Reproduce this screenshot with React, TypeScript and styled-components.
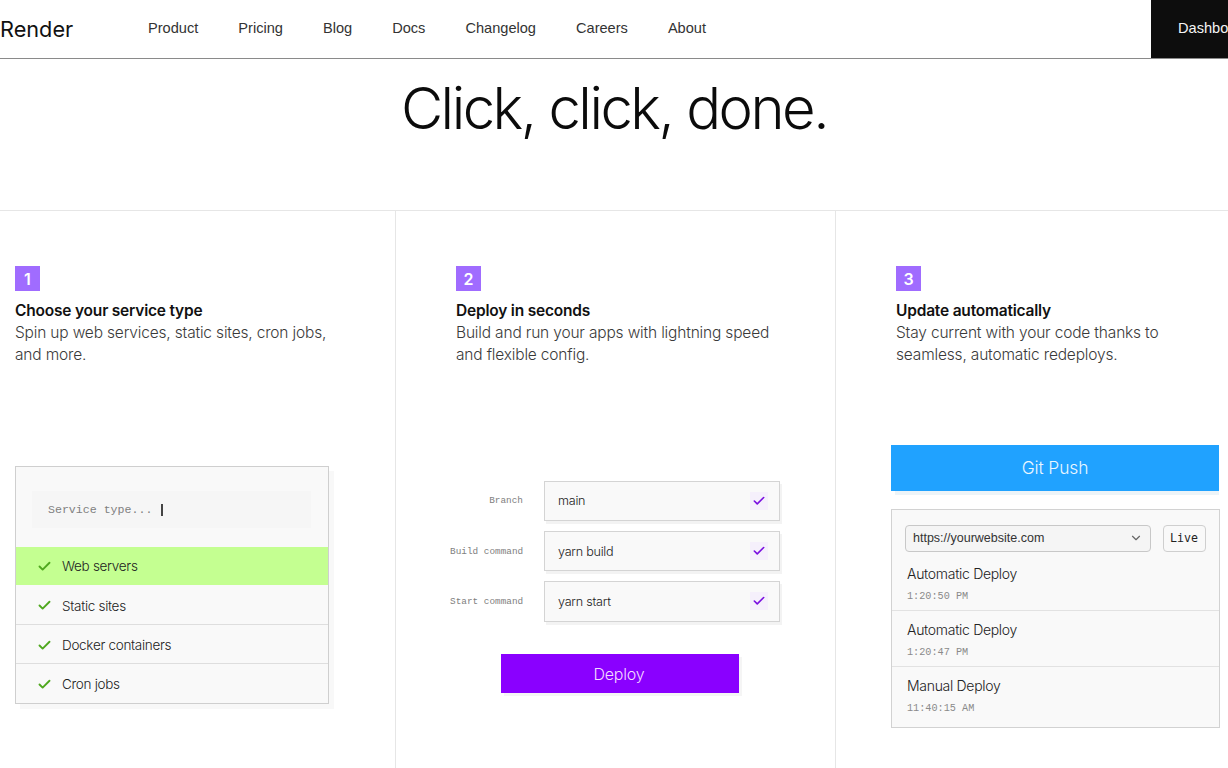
import React from 'react';
import styled, { createGlobalStyle } from 'styled-components';
import { Check, ChevronDown } from 'lucide-react';

const Global = createGlobalStyle`
  html, body {
    margin: 0;
    height: 768px;
    overflow: hidden;
    background: #fff;
    font-family: "Inter", "Liberation Sans", sans-serif;
    color: #111;
  }
  * { box-sizing: border-box; }
`;

// Header
const Header = styled.header`
  display: flex;
  align-items: center;
  width: 1228px;
  height: 59px;
  border-bottom: 1px solid #8a8a8a;
  overflow: hidden;
`;

const Logo = styled.div`
  width: 148px;
  flex: none;
  font-size: 21.7px;
  font-weight: 400;
  color: #111;
`;

const Nav = styled.nav`
  display: flex;
  gap: 40px;
  flex: 1;
  margin-top: -2px;
`;

const NavLink = styled.a`
  font-family: "Liberation Sans", sans-serif;
  font-size: 14.6px;
  color: #333;
`;

const Dashboard = styled.a`
  flex: none;
  align-self: stretch;
  width: 77px;
  margin-bottom: -1px;
  padding: 20px 0 0 27px;
  background: #0d0d0d;
  color: #f4f4f4;
  font-family: "Liberation Sans", sans-serif;
  font-size: 14.6px;
  white-space: nowrap;
  overflow: hidden;
`;

// Hero
const Hero = styled.div`
  height: 152px;
  border-bottom: 1px solid #e6e6e6;
  text-align: center;
`;

const Title = styled.h1`
  margin: 0;
  padding-top: 13px;
  font-size: 58px;
  line-height: 72px;
  font-weight: 300;
  letter-spacing: -2.5px;
  color: #0b0b0b;
`;

// Columns
const Columns = styled.div`
  display: grid;
  grid-template-columns: 396px 440px 392px;
  height: 557px;
`;

const Column = styled.section<{ $pad: number; $last?: boolean }>`
  padding: 55px 0 0 ${(p) => p.$pad}px;
  border-right: ${(p) => (p.$last ? 'none' : '1px solid #e6e6e6')};
`;

const Badge = styled.div`
  display: flex;
  align-items: center;
  justify-content: center;
  width: 25px;
  height: 25px;
  background: #a06cff;
  color: #fff;
  font-size: 16px;
  font-weight: 600;
`;

const StepTitle = styled.h3`
  margin: 9px 0 0;
  font-size: 15.5px;
  line-height: 22px;
  font-weight: 600;
  letter-spacing: -0.2px;
  color: #111;
`;

const StepText = styled.p`
  margin: 0;
  font-size: 15.5px;
  line-height: 22px;
  font-weight: 300;
  letter-spacing: -0.17px;
  color: #3a3a3a;
`;

// Service type card
const ServiceCard = styled.div`
  width: 314px;
  height: 238px;
  margin-top: 100px;
  border: 1px solid #cfcfcf;
  background: #f9f9f9;
  box-shadow: 5px 5px 0 #f8f8f8;
`;

const SearchBox = styled.div`
  display: flex;
  align-items: center;
  height: 37px;
  width: 279px;
  margin: 24px 0 19px 16px;
  padding-left: 16px;
  background: #f6f6f6;
  font-family: "Liberation Mono", monospace;
  font-size: 11.6px;
  color: #808080;
`;

const Caret = styled.span`
  width: 1.2px;
  height: 12px;
  margin-left: 9px;
  background: #444;
`;

const ServiceRow = styled.div<{ $active?: boolean; $divider?: boolean }>`
  display: flex;
  align-items: center;
  height: ${(p) => (p.$active ? '38px' : '39px')};
  padding: ${(p) => (p.$active ? '0' : '2px')} 0 0 20.5px;
  gap: 10.5px;
  font-size: 13.5px;
  font-weight: 300;
  letter-spacing: -0.3px;
  color: #222;
  background: ${(p) => (p.$active ? '#c4ff91' : 'transparent')};
  border-top: ${(p) => (p.$divider ? '1px solid #dedede' : 'none')};
`;

// Deploy form
const Form = styled.div`
  display: grid;
  grid-template-columns: 73px 236px;
  column-gap: 21px;
  row-gap: 9.8px;
  margin: 114.5px 0 0 -6px;
  align-items: center;
`;

const FieldLabel = styled.label`
  font-family: "Liberation Mono", monospace;
  font-size: 9.4px;
  color: #808080;
  text-align: right;
  white-space: nowrap;
`;

const Field = styled.div`
  display: flex;
  align-items: center;
  justify-content: space-between;
  height: 40.5px;
  padding: 0 11px 0 13px;
  border: 1px solid #d4d4d4;
  background: #f9f9f9;
  box-shadow: 2px 3px 0 #f3f3f3;
  font-size: 12.6px;
  font-weight: 300;
  letter-spacing: -0.25px;
  color: #222;
`;

const CheckBox = styled.span`
  display: flex;
  align-items: center;
  justify-content: center;
  width: 18px;
  height: 18px;
  background: #f5f0fb;
  color: #7a0fe0;
`;

const DeployButton = styled.button`
  display: block;
  width: 238px;
  height: 39.5px;
  margin: 32.4px 0 0 45px;
  padding: 0 2px 0 0;
  border: 0;
  background: #8a00ff;
  color: #f3dcff;
  font-family: inherit;
  font-size: 16px;
  font-weight: 300;
  letter-spacing: -0.2px;
  box-shadow: 3px 3px 0 #f5f5f5;
`;

// Git push
const PushWrap = styled.div`
  margin: 79px 0 0 -5px;
  width: 329px;
`;

const PushButton = styled.button`
  display: block;
  width: 328px;
  height: 45.5px;
  border: 0;
  background: #20a2ff;
  color: #e9f6ff;
  font-family: inherit;
  font-size: 17.4px;
  font-weight: 300;
  letter-spacing: -0.1px;
  box-shadow: 2px 6px 0 -2px #edf4f8;
`;

const DeployPanel = styled.div`
  margin-top: 18.5px;
  width: 328.5px;
  height: 218.5px;
  border: 1px solid #d2d2d2;
  background: #f9f9f9;
`;

const PanelTop = styled.div`
  display: flex;
  align-items: center;
  gap: 11.5px;
  padding: 15px 13px 0 13px;
`;

const UrlSelect = styled.div`
  display: flex;
  align-items: center;
  justify-content: space-between;
  width: 247px;
  height: 26.5px;
  padding: 0 7px;
  border: 1px solid #c8c8c8;
  border-radius: 4px;
  background: #f5f5f5;
  font-family: "Liberation Sans", sans-serif;
  font-size: 12.5px;
  color: #333;
`;

const LiveTag = styled.div`
  display: flex;
  align-items: center;
  justify-content: center;
  width: 43px;
  height: 26.5px;
  border: 1px solid #cfcfcf;
  border-radius: 4px;
  font-family: "DejaVu Sans Mono", monospace;
  font-size: 11.6px;
  color: #222;
`;

const DeployItem = styled.div<{ $divider?: boolean; $first?: boolean }>`
  height: ${(p) => (p.$first ? '58.8px' : '56px')};
  padding: ${(p) => (p.$first ? '12.5px' : '9px')} 0 0 15px;
  border-top: ${(p) => (p.$divider ? '1px solid #e2e2e2' : 'none')};
`;

const DeployName = styled.div`
  font-size: 14px;
  line-height: 20px;
  font-weight: 300;
  letter-spacing: -0.3px;
  color: #222;
`;

const DeployTime = styled.div`
  margin-top: 6px;
  font-family: "Liberation Mono", monospace;
  font-size: 10.2px;
  line-height: 14px;
  color: #8a8a8a;
`;

const services = ['Web servers', 'Static sites', 'Docker containers', 'Cron jobs'];
const fields = [
  ['Branch', 'main'],
  ['Build command', 'yarn build'],
  ['Start command', 'yarn start'],
];
const deploys = [
  ['Automatic Deploy', '1:20:50 PM'],
  ['Automatic Deploy', '1:20:47 PM'],
  ['Manual Deploy', '11:40:15 AM'],
];
const navItems = ['Product', 'Pricing', 'Blog', 'Docs', 'Changelog', 'Careers', 'About'];

export default function App() {
  return (
    <>
      <Global />
      <Header>
        <Logo>Render</Logo>
        <Nav>
          {navItems.map((n) => (
            <NavLink key={n}>{n}</NavLink>
          ))}
        </Nav>
        <Dashboard>Dashboard</Dashboard>
      </Header>
      <Hero>
        <Title>Click, click, done.</Title>
      </Hero>
      <Columns>
        <Column $pad={15}>
          <Badge>1</Badge>
          <StepTitle>Choose your service type</StepTitle>
          <StepText>
            Spin up web services, static sites, cron jobs,
            <br />
            and more.
          </StepText>
          <ServiceCard>
            <SearchBox>
              Service type...
              <Caret />
            </SearchBox>
            {services.map((s, i) => (
              <ServiceRow key={s} $active={i === 0} $divider={i > 1}>
                <Check size={15} color="#4fa81e" strokeWidth={3} />
                {s}
              </ServiceRow>
            ))}
          </ServiceCard>
        </Column>
        <Column $pad={60}>
          <Badge>2</Badge>
          <StepTitle>Deploy in seconds</StepTitle>
          <StepText>
            Build and run your apps with lightning speed
            <br />
            and flexible config.
          </StepText>
          <Form>
            {fields.map(([label, value]) => (
              <React.Fragment key={label}>
                <FieldLabel>{label}</FieldLabel>
                <Field>
                  {value}
                  <CheckBox>
                    <Check size={14} strokeWidth={2.8} />
                  </CheckBox>
                </Field>
              </React.Fragment>
            ))}
          </Form>
          <DeployButton>Deploy</DeployButton>
        </Column>
        <Column $pad={60} $last>
          <Badge>3</Badge>
          <StepTitle>Update automatically</StepTitle>
          <StepText>
            Stay current with your code thanks to
            <br />
            seamless, automatic redeploys.
          </StepText>
          <PushWrap>
            <PushButton>Git Push</PushButton>
            <DeployPanel>
              <PanelTop>
                <UrlSelect>
                  https://yourwebsite.com
                  <ChevronDown size={14} color="#666" />
                </UrlSelect>
                <LiveTag>Live</LiveTag>
              </PanelTop>
              {deploys.map(([name, time], i) => (
                <DeployItem key={time} $first={i === 0} $divider={i > 0}>
                  <DeployName>{name}</DeployName>
                  <DeployTime>{time}</DeployTime>
                </DeployItem>
              ))}
            </DeployPanel>
          </PushWrap>
        </Column>
      </Columns>
    </>
  );
}
